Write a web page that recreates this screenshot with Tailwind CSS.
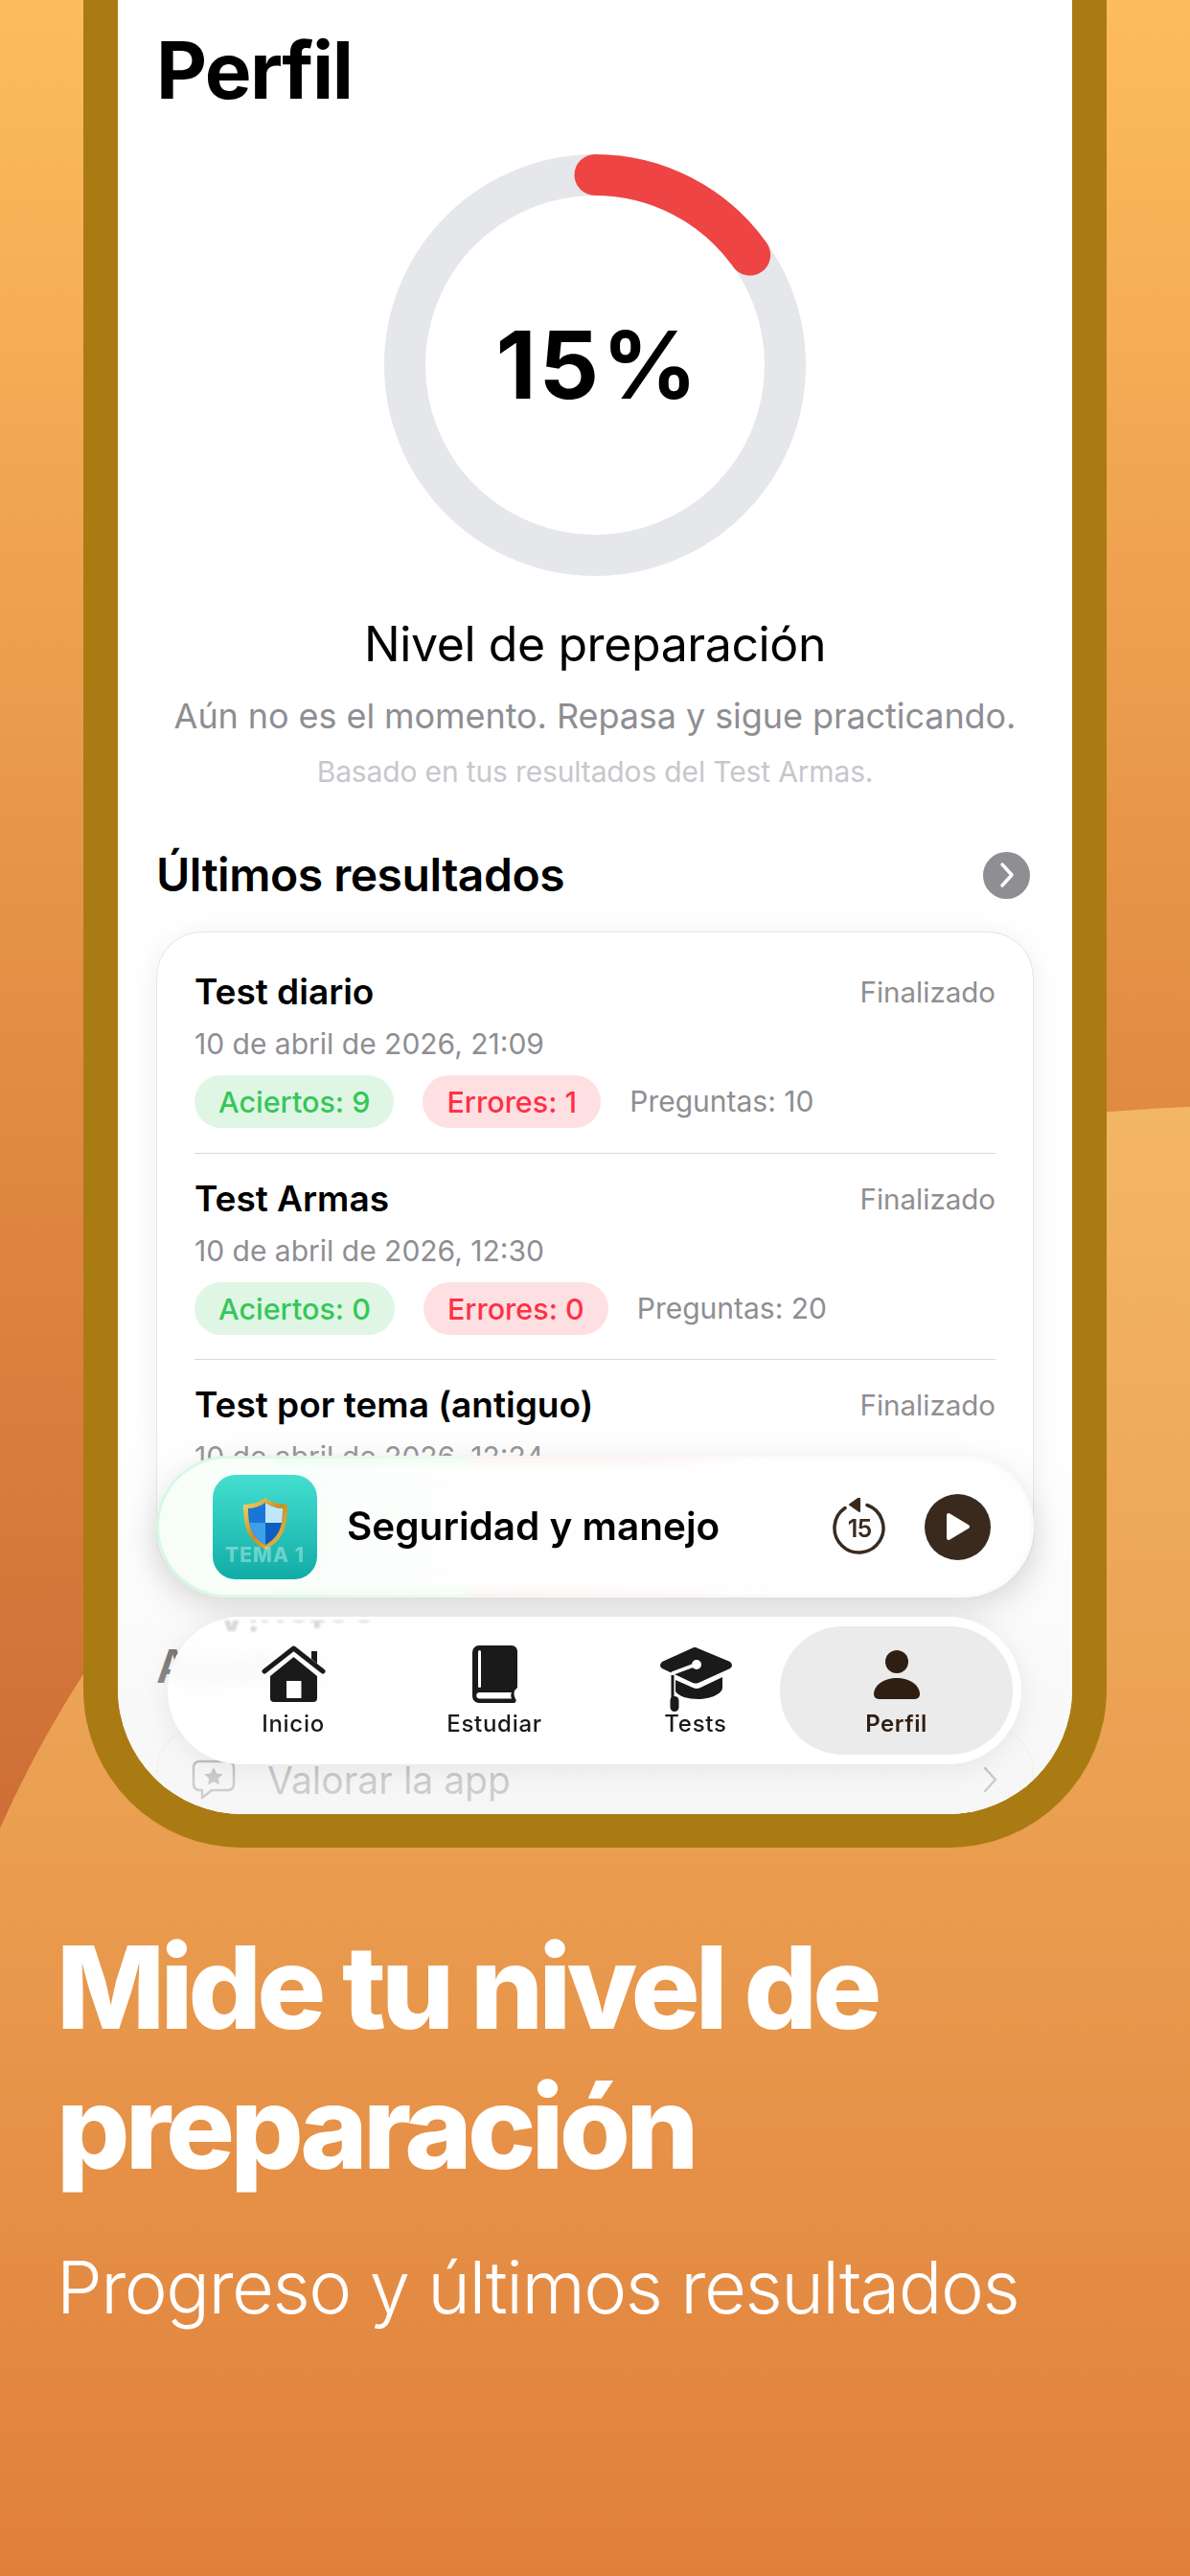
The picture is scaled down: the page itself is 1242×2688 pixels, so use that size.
<!DOCTYPE html>
<html lang="es">
  <head>
    <meta charset="UTF-8" />
    <meta name="viewport" content="width=device-width, initial-scale=1.0" />
    <title>Perfil</title>
    <script src="https://cdn.jsdelivr.net/npm/@tailwindcss/browser@4"></script>
  </head>
  <body>
    <div class="relative w-[1242px] h-[2688px] overflow-hidden font-['Inter','Noto_Sans',sans-serif] bg-[linear-gradient(to_bottom,#fdbc5e,#e28c43_1100px,#cd6f36_1900px)]">
      <!-- background wave -->
      <svg class="absolute inset-0" width="1242" height="2688" viewBox="0 0 1242 2688">
        <defs>
          <linearGradient id="wave" gradientUnits="userSpaceOnUse" x1="0" y1="1155" x2="0" y2="2688">
            <stop offset="0" stop-color="#f3b665" />
            <stop offset="0.5" stop-color="#ea9e50" />
            <stop offset="1" stop-color="#e07f3b" />
          </linearGradient>
        </defs>
        <path d="M0 1908C70 1750 210 1530 480 1370C760 1205 1010 1165 1242 1155V2688H0Z" fill="url(#wave)" />
      </svg>

      <!-- phone -->
      <div class="relative mx-[87px] h-[1928px] bg-[#ab7b13] rounded-b-[165px] px-[36px] pb-[35px]">
        <div class="relative h-[1893px] bg-white rounded-b-[130px] overflow-hidden">
          <div class="px-[40px] pt-[24px]">
            <h1 class="text-[82px] leading-[100px] font-bold tracking-[-0.02em] text-black">Perfil</h1>

            <div class="relative mt-[36px] mx-auto w-[442px] h-[442px] flex items-center justify-center">
              <svg class="absolute inset-0" width="442" height="442" viewBox="0 0 442 442" fill="none">
                <circle cx="221" cy="221" r="198.5" stroke="#e5e7eb" stroke-width="43" />
                <path d="M221 22.5A198.5 198.5 0 0 1 382.7 106" stroke="#ef4444" stroke-width="43" stroke-linecap="round" />
              </svg>
              <span class="ml-[6px] text-[98px] leading-none font-bold tracking-[0.03em] text-black">15%</span>
            </div>

            <p class="mt-[40px] text-center text-[50px] leading-[60px] tracking-[-0.008em] text-black">Nivel de preparación</p>
            <p class="mt-[23px] text-center text-[36px] leading-[44px] tracking-[-0.002em] text-[#8e8e93]">Aún no es el momento. Repasa y sigue practicando.</p>
            <p class="mt-[18px] text-center text-[30px] leading-[36px] tracking-[-0.005em] text-[#c7c7cc]">Basado en tus resultados del Test Armas.</p>

            <div class="mt-[60px] flex items-center justify-between">
              <h2 class="text-[48px] leading-[60px] font-semibold text-black tracking-[-0.01em]">Últimos resultados</h2>
              <span class="mr-[4px] w-[49px] h-[49px] rounded-full bg-[#8e8e93] flex items-center justify-center">
                <svg width="18" height="28" viewBox="0 0 18 28" fill="none"><path d="M4 3l10 11L4 25" stroke="#fff" stroke-width="3.5" stroke-linecap="round" stroke-linejoin="round" /></svg>
              </span>
            </div>

            <!-- results -->
            <div class="mt-[29px] h-[679px] rounded-[48px] border border-[#e5e5ea] bg-white px-[39px] pt-[40px] shadow-[0_4px_30px_rgba(0,0,0,0.07)]">
              <div class="h-[191px] border-b border-[#d8d8dc]">
                <div class="flex items-center justify-between">
                  <span class="text-[37px] leading-[44px] font-semibold text-black">Test diario</span>
                  <span class="text-[29.5px] leading-[44px] text-[#8e8e93]">Finalizado</span>
                </div>
                <p class="mt-[14px] text-[30px] leading-[36px] text-[#8e8e93]">10 de abril de 2026, 21:09</p>
                <div class="mt-[15px] flex items-center gap-[30px] text-[30px]">
                  <span class="h-[55px] px-[25px] rounded-full bg-[#e0f6e4] text-[#34c759] text-[30.5px] font-medium flex items-center">Aciertos: 9</span>
                  <span class="h-[55px] px-[25px] rounded-full bg-[#ffe0e2] text-[#ff3045] text-[30.5px] font-medium flex items-center">Errores: 1</span>
                  <span class="text-[#8e8e93]">Preguntas: 10</span>
                </div>
              </div>
              <div class="h-[215px] pt-[25px] border-b border-[#d8d8dc]">
                <div class="flex items-center justify-between">
                  <span class="text-[37px] leading-[44px] font-semibold text-black">Test Armas</span>
                  <span class="text-[29.5px] leading-[44px] text-[#8e8e93]">Finalizado</span>
                </div>
                <p class="mt-[14px] text-[30px] leading-[36px] text-[#8e8e93]">10 de abril de 2026, 12:30</p>
                <div class="mt-[15px] flex items-center gap-[30px] text-[30px]">
                  <span class="h-[55px] px-[25px] rounded-full bg-[#e0f6e4] text-[#34c759] text-[30.5px] font-medium flex items-center">Aciertos: 0</span>
                  <span class="h-[55px] px-[25px] rounded-full bg-[#ffe0e2] text-[#ff3045] text-[30.5px] font-medium flex items-center">Errores: 0</span>
                  <span class="text-[#8e8e93]">Preguntas: 20</span>
                </div>
              </div>
              <div class="pt-[25px]">
                <div class="flex items-center justify-between">
                  <span class="text-[37px] leading-[44px] font-semibold text-black">Test por tema (antiguo)</span>
                  <span class="text-[29.5px] leading-[44px] text-[#8e8e93]">Finalizado</span>
                </div>
                <p class="mt-[14px] text-[30px] leading-[36px] text-[#8e8e93]">10 de abril de 2026, 12:24</p>
                <div class="mt-[15px] flex items-center gap-[30px] text-[30px]">
                  <span class="h-[55px] px-[25px] rounded-full bg-[#e0f6e4] text-[#34c759] text-[30.5px] font-medium flex items-center">Aciertos: 8</span>
                  <span class="h-[55px] px-[25px] rounded-full bg-[#ffe0e2] text-[#ff3045] text-[30.5px] font-medium flex items-center">Errores: 2</span>
                  <span class="text-[#8e8e93]">Preguntas: 10</span>
                </div>
              </div>
            </div>

            <h2 class="mt-[58px] text-[48px] leading-[60px] font-semibold text-black">Ajustes</h2>
            <div class="mt-[32px] rounded-[48px] border border-[#d8d8dc] bg-white h-[300px]">
              <div class="h-[110px] pl-[36px] pr-[36px] flex items-center">
                <svg width="46" height="42" viewBox="0 0 46 42" fill="none">
                  <path d="M8 2H38a6 6 0 0 1 6 6V26a6 6 0 0 1-6 6H21L11 40V32H8a6 6 0 0 1-6-6V8a6 6 0 0 1 6-6Z" stroke="#000" stroke-width="2.5" stroke-linejoin="round" />
                  <path d="M23 8l3 6.4 6.8.8-5 4.6 1.3 6.7-6.100-3.300-6.100 3.300 1.300-6.700-5-4.600 6.800-.8Z" fill="#000" />
                </svg>
                <span class="ml-[33px] text-[39px] leading-none text-black">Valorar la app</span>
                <svg class="ml-auto" width="16" height="28" viewBox="0 0 16 28" fill="none"><path d="M2 2l11 12L2 26" stroke="#000" stroke-width="2.500" stroke-linecap="round" stroke-linejoin="round" /></svg>
              </div>
            </div>
          </div>

          <!-- fade under the floating bars -->
          <div class="absolute inset-x-0 bottom-0 h-[423px] bg-[linear-gradient(to_bottom,transparent,rgba(245,245,245,0.5)_61%,rgba(245,245,245,0.84)_92%)]"></div>

          <!-- mini player -->
          <div class="absolute left-[40px] bottom-[226px] w-[916px] h-[148px] rounded-[74px] p-[3px] bg-[linear-gradient(to_right,#d5f8df,#f1fbf3_30%,#fbfbfb_55%)] shadow-[0_12px_36px_rgba(0,0,0,0.13)]">
            <div class="relative h-full rounded-[71px] bg-white/80 backdrop-blur-lg flex items-center pl-[56px] pr-[42px]">
              <div class="relative w-[109px] h-[109px] rounded-[24px] bg-[linear-gradient(to_bottom,#44dfd0,#10aca6)] shrink-0 overflow-hidden flex justify-center">
                <svg class="mt-[24px]" width="46" height="54" viewBox="0 0 46 54">
                  <defs>
                    <linearGradient id="gold" x1="0" y1="0" x2="1" y2="1">
                      <stop offset="0" stop-color="#f7d774" />
                      <stop offset="0.5" stop-color="#c98f1e" />
                      <stop offset="1" stop-color="#f0c24f" />
                    </linearGradient>
                    <clipPath id="shield-in"><path d="M23 5C29 9 35 11 41 11C41 30 37 41 23 49C9 41 5 30 5 11C11 11 17 9 23 5Z" /></clipPath>
                  </defs>
                  <path d="M23 0C30 5 38 7 46 7C46 30 42 44 23 54C4 44 0 30 0 7C8 7 16 5 23 0Z" fill="url(#gold)" />
                  <g clip-path="url(#shield-in)">
                    <rect width="46" height="54" fill="#1976d8" />
                    <rect x="23" width="23" height="26" fill="#bfe6fb" />
                    <rect y="26" width="23" height="28" fill="#3da0e8" />
                    <rect x="23" y="26" width="23" height="28" fill="#0d5fc0" />
                  </g>
                </svg>
                <span class="absolute left-0 right-0 top-[73px] text-center text-[21px] leading-[22px] font-extrabold tracking-[0.05em] text-white/35">TEMA 1</span>
              </div>
              <span class="ml-[31px] text-[40.5px] leading-none font-semibold text-black">Seguridad y manejo</span>
              <svg class="ml-auto" width="56" height="60" viewBox="0 0 56 60" fill="none">
                <path d="M36 7.500A25.500 25.500 0 1 1 13 10.500" stroke="#3a2a1e" stroke-width="3.500" stroke-linecap="round" />
                <path d="M28 0V14L18 7Z" fill="#3a2a1e" stroke="#3a2a1e" stroke-width="2" stroke-linejoin="round" />
                <text x="28" y="41" text-anchor="middle" font-family="Inter" font-size="25" font-weight="600" letter-spacing="-1" fill="#3a2a1e">15</text>
              </svg>
              <span class="ml-[40px] w-[69px] h-[69px] rounded-full bg-[#3a2a1e] flex items-center justify-center shrink-0">
                <svg width="26" height="30" viewBox="0 0 26 30"><path d="M3 3L23 15L3 27Z" fill="#fff" stroke="#fff" stroke-width="4" stroke-linejoin="round" /></svg>
              </span>
              <span class="absolute left-[120px] right-[270px] top-0 h-[5px] blur-[3px] opacity-50 bg-[linear-gradient(to_right,#d8f8e0,#d8f8e0_38%,#ffdde0_40%,#ffdde0_75%,transparent)]"></span>
              <span class="absolute left-[120px] right-[270px] bottom-0 h-[4px] blur-[3px] opacity-50 bg-[linear-gradient(to_right,#d8f8e0,#d8f8e0_38%,#ffdde0_40%,#ffdde0_75%,transparent)]"></span>
            </div>
          </div>

          <!-- tab bar -->
          <nav class="absolute left-[52px] bottom-[52px] w-[891px] h-[154px] rounded-[77px] bg-white/90 backdrop-blur-[8px] shadow-[0_4px_30px_rgba(0,0,0,0.08)] flex items-center pl-[26px] pr-[9px]">
            <div class="absolute left-[50px] top-[4px] h-[12px] overflow-hidden blur-[1px]">
              <span class="block -scale-y-100 text-[46px] leading-[40px] -mt-[26px] font-semibold text-black/15">Ajustes</span>
            </div>
            <a class="relative w-[210px] h-[134px] pt-[20px] flex flex-col items-center">
              <svg width="67" height="60" viewBox="0 0 67 60" fill="none">
                <path d="M33.500 12L58 32V55a4 4 0 0 1-4 4H13a4 4 0 0 1-4-4V32ZM26 37V55H41.500V37Z" fill="#1a1a1a" fill-rule="evenodd" />
                <path d="M3 27L33.500 3L64 27" stroke="#1a1a1a" stroke-width="5" stroke-linecap="round" stroke-linejoin="round" />
                <path d="M52 6H58V19L52 14Z" fill="#1a1a1a" />
              </svg>
              <span class="mt-[7px] text-[24px] leading-[30px] font-medium tracking-[0.03em] text-[#1a1a1a]">Inicio</span>
            </a>
            <a class="relative w-[210px] h-[134px] pt-[20px] flex flex-col items-center">
              <svg width="47" height="60" viewBox="0 0 47 60" fill="none">
                <path d="M7 0H41a6 6 0 0 1 6 6V43c0 1.500-.7 2-2 3-2 2-2 6 0 9.500 1.500 2.500 0 4.500-2 4.500H7a7 7 0 0 1-7-7V7a7 7 0 0 1 7-7Z" fill="#1a1a1a" />
                <path d="M7 49H41c-1 2-1 4 0 6.500H7a3.300 3.300 0 0 1 0-6.500Z" fill="#fff" />
                <rect x="6" y="5" width="3" height="39" rx="1.500" fill="#fff" />
              </svg>
              <span class="mt-[7px] text-[24px] leading-[30px] font-medium tracking-[0.03em] text-[#1a1a1a]">Estudiar</span>
            </a>
            <a class="relative w-[210px] h-[134px] pt-[21px] flex flex-col items-center">
              <svg class="-mb-[9px]" width="77" height="68" viewBox="0 0 77 68" fill="none">
                <path d="M38 1L74 16Q78 20 74 23L41 38Q38 39 35 38L3 23Q-1 20 3 16L34 2Q36 .5 38 1Z" fill="#1a1a1a" />
                <path d="M17 35L35 43Q39 45 43 43L66 32V43C66 50 52 55 41 55C30 55 20 52 17 47Z" fill="#1a1a1a" />
                <path d="M38 19L14 28" stroke="#fff" stroke-width="3.500" stroke-linecap="round" />
                <circle cx="39" cy="19" r="5" fill="#fff" />
                <path d="M14 30V55" stroke="#1a1a1a" stroke-width="3" />
                <rect x="11.500" y="52" width="9" height="16" rx="4.500" fill="#1a1a1a" />
              </svg>
              <span class="mt-[7px] text-[24px] leading-[30px] font-medium tracking-[0.03em] text-[#1a1a1a]">Tests</span>
            </a>
            <a class="relative w-[243px] h-[134px] -ml-[17px] pt-[25px] rounded-[66px] bg-[#ebebeb] flex flex-col items-center">
              <svg width="48" height="51" viewBox="0 0 48 51" fill="none">
                <circle cx="24" cy="12" r="12" fill="#2f1f12" />
                <path d="M0 46C0 36 11 29 24 29C37 29 48 36 48 46a5 5 0 0 1-5 5H5a5 5 0 0 1-5-5Z" fill="#2f1f12" />
              </svg>
              <span class="mt-[11px] text-[24px] leading-[30px] font-semibold tracking-[0.02em] text-[#2f1f12]">Perfil</span>
            </a>
          </nav>
        </div>
      </div>

      <!-- caption -->
      <div class="relative px-[59px] pt-[73px]">
        <h1 class="text-[120px] leading-[146px] font-extrabold tracking-[-0.04em] text-white">Mide tu nivel de preparación</h1>
        <p class="mt-[43px] text-[76px] leading-[100px] font-light tracking-[-0.02em] text-white">Progreso y últimos resultados</p>
      </div>
    </div>
  </body>
</html>
